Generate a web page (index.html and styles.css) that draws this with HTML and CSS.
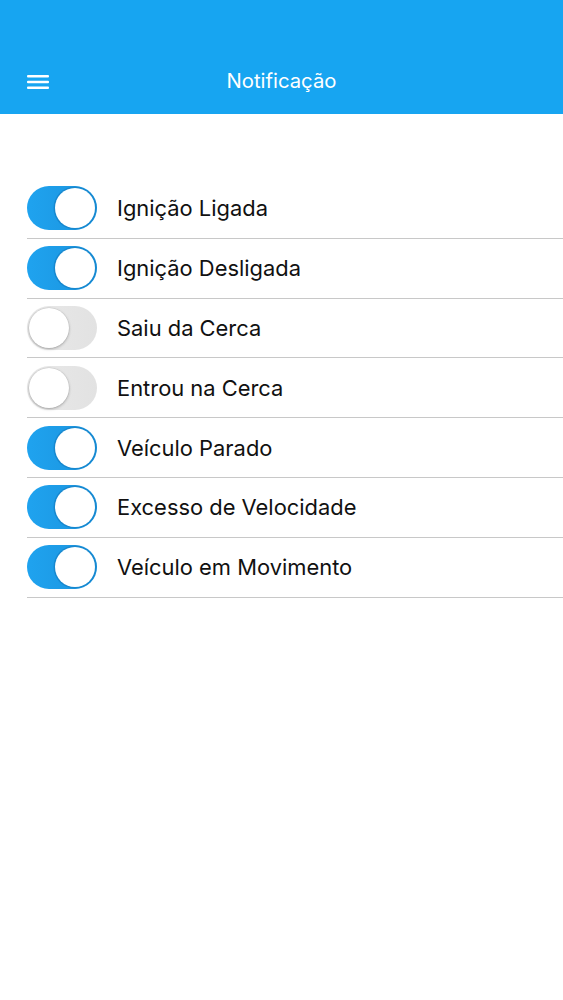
FILE: index.html
```html
<!DOCTYPE html>
<html>
<head>
<meta charset="utf-8">
<link rel="stylesheet" href="styles.css">
</head>
<body>
<header class="topbar">
  <div class="menu">
    <svg width="22" height="16" viewBox="0 0 22 16"><rect x="0" y="1" width="22" height="2.6" rx="1" fill="#fff"/><rect x="0" y="6.7" width="22" height="2.6" rx="1" fill="#fff"/><rect x="0" y="12.4" width="22" height="2.6" rx="1" fill="#fff"/></svg>
  </div>
  <div class="title">Notificação</div>
</header>
<ul class="list">
  <li class="row"><span class="toggle on"><span class="knob"></span></span><span class="label">Ignição Ligada</span></li>
  <li class="row"><span class="toggle on"><span class="knob"></span></span><span class="label">Ignição Desligada</span></li>
  <li class="row"><span class="toggle"><span class="knob"></span></span><span class="label">Saiu da Cerca</span></li>
  <li class="row"><span class="toggle"><span class="knob"></span></span><span class="label">Entrou na Cerca</span></li>
  <li class="row"><span class="toggle on"><span class="knob"></span></span><span class="label">Veículo Parado</span></li>
  <li class="row"><span class="toggle on"><span class="knob"></span></span><span class="label">Excesso de Velocidade</span></li>
  <li class="row"><span class="toggle on"><span class="knob"></span></span><span class="label">Veículo em Movimento</span></li>
</ul>
</body>
</html>
```
FILE: styles.css
```css
* { box-sizing: border-box; }
html, body { margin: 0; padding: 0; background: #fff; }
body { font-family: Inter, "Liberation Sans", Arial, sans-serif; width: 563px; height: 1000px; }
.topbar {
  height: 114px;
  background: #17a5f1;
  display: flex;
  align-items: flex-end;
  position: relative;
  padding: 0 0 22px 27px;
}
.menu { width: 22px; height: 16px; display: flex; margin-bottom: 2px; }
.title {
  position: absolute;
  left: 0; right: 0; bottom: 21px;
  text-align: center;
  color: #fff;
  font-size: 20.3px;
  pointer-events: none;
}
.list { list-style: none; margin: 0; padding: 0 0 0 27px; margin-top: 65px; }
.row {
  height: 59.8px;
  display: flex;
  align-items: center;
  border-bottom: 1px solid #c8c8c8;
}
.toggle {
  width: 70px; height: 44px;
  border-radius: 22px;
  background: linear-gradient(to right, #e9e9e9, #e2e2e2);
  display: flex;
  align-items: center;
  padding: 2px;
  flex: none;
}
.toggle .knob {
  width: 40px; height: 40px; border-radius: 50%;
  background: #fff;
  box-shadow: 0 1px 3px rgba(0,0,0,0.28), 0 0 0 0.5px rgba(0,0,0,0.08);
}
.toggle.on {
  background: linear-gradient(to right, #1fa3ef, #1b93dd);
  justify-content: flex-end;
}
.toggle.on .knob {
  box-shadow: 0 0 0 1.5px #1788cf;
}
.label {
  margin-left: 20px;
  font-size: 21.9px;
  color: #111;
}
```
